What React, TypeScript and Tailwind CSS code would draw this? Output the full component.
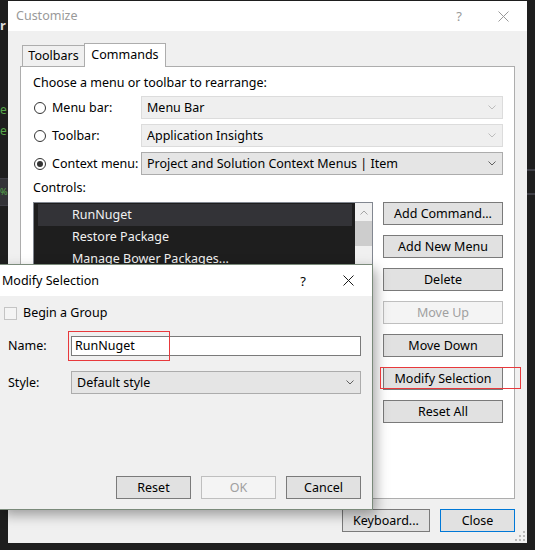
import React from "react";

function Chevron({ color = "#5f5f5f", up = false }: { color?: string; up?: boolean }) {
  return (
    <svg width="8" height="5" viewBox="0 0 8 5" className="block">
      <polyline
        points={up ? "0.5,4.5 4,1 7.5,4.5" : "0.5,0.5 4,4 7.5,0.5"}
        fill="none"
        stroke={color}
        strokeWidth="1"
      />
    </svg>
  );
}

function CloseX({ color }: { color: string }) {
  return (
    <svg width="11" height="11" viewBox="0 0 11 11" className="block">
      <path d="M0.5 0.5 L10.5 10.5 M10.5 0.5 L0.5 10.5" stroke={color} strokeWidth="1" fill="none" />
    </svg>
  );
}

function Btn({ label, kind = "normal", w }: { label: string; kind?: "normal" | "disabled" | "primary"; w: string }) {
  const base = "h-[23px] flex items-center justify-center border shrink-0 ";
  const cls =
    kind === "disabled"
      ? "border-[#bfbfbf] bg-[#f4f4f4] text-[#a0a0a0]"
      : kind === "primary"
      ? "border-[#0078d7] bg-[#e1e1e1] text-black"
      : "border-[#7a7a7a] bg-[#e1e1e1] text-black";
  return <div className={base + cls + " " + w}>{label}</div>;
}

function Radio({ checked }: { checked?: boolean }) {
  return (
    <div className="ml-[1px] w-[12px] h-[12px] rounded-full border border-[#333333] bg-white flex items-center justify-center shrink-0">
      {checked ? <div className="w-[6px] h-[6px] rounded-full bg-[#333333]" /> : null}
    </div>
  );
}

function Combo({ text, enabled, w }: { text: string; enabled?: boolean; w: string }) {
  return (
    <div
      className={
        "h-[23px] border flex items-center pl-[5px] pr-[6px] " +
        w +
        (enabled ? " border-[#acacac] bg-[#e5e5e5]" : " border-[#dcdcdc] bg-[#efefef]")
      }
    >
      <span className="flex-1 truncate">{text}</span>
      <Chevron color={enabled ? "#606060" : "#bcbcbc"} />
    </div>
  );
}

export default function App() {
  const sideButtons: { label: string; kind?: "normal" | "disabled" }[] = [
    { label: "Add Command..." },
    { label: "Add New Menu" },
    { label: "Delete" },
    { label: "Move Up", kind: "disabled" },
    { label: "Move Down" },
    { label: "Modify Selection" },
    { label: "Reset All" },
  ];

  return (
    <div className="relative w-[535px] h-[550px] overflow-hidden bg-[#1e1e1e] font-['Noto_Sans','Segoe_UI',sans-serif] text-[12.5px] leading-[16px] text-black">
      {/* background editor fragments */}
      <div className="absolute left-0 top-[17px] text-[13px] leading-[16px] font-bold text-[#dcdcdc]">r</div>
      <div className="absolute left-0 top-[102px] text-[12px] leading-[16px] text-[#57a64a]">e</div>
      <div className="absolute left-0 top-[123px] text-[12px] leading-[16px] text-[#57a64a]">e</div>
      <div className="absolute left-0 top-[178px] w-[10px] h-[28px] bg-[#333337] border-y border-[#3f3f46]" />
      <div className="absolute left-0 top-[185px] text-[9px] leading-[14px] text-[#57a64a]">%</div>
      <div className="absolute left-[527px] top-[169px] w-[8px] h-[2px] bg-[#3f3f46]" />
      <div className="absolute left-[527px] top-[193px] w-[8px] h-[2px] bg-[#3f3f46]" />

      {/* Customize window */}
      <div className="absolute left-[8px] top-[1px] w-[519px] h-[542px] bg-[#f0f0f0] flex flex-col">
        <div className="h-[30px] bg-white flex items-center shrink-0">
          <span className="pl-[8px] text-[#999999]">Customize</span>
          <span className="ml-auto text-[13px] text-[#999999]">?</span>
          <span className="ml-[36px] mr-[18px]">
            <CloseX color="#999999" />
          </span>
        </div>

        <div className="pl-[12px] pt-[12px] flex flex-col">
          {/* tabs */}
          <div className="relative z-10 flex items-end h-[23px] pl-[2px]">
            <div className="w-[63px] h-[21px] border border-b-0 border-[#adadad] bg-[#f0f0f0] flex items-center justify-center">
              Toolbars
            </div>
            <div className="w-[82px] h-[24px] -ml-px -mb-px border border-b-0 border-[#adadad] bg-white flex items-center justify-center pb-[2px]">
              Commands
            </div>
          </div>

          {/* panel */}
          <div className="w-[495px] h-[433px] border border-[#adadad] bg-white pl-[12px] pr-[11px] flex flex-col">
            <div className="mt-[8px] h-[16px]">Choose a menu or toolbar to rearrange:</div>

            <div className="mt-[5px] flex flex-col gap-[5px]">
              <div className="flex items-center h-[23px]">
                <div className="w-[108px] flex items-center gap-[6px]">
                  <Radio />
                  <span>Menu bar:</span>
                </div>
                <Combo text="Menu Bar" w="w-[362px]" />
              </div>
              <div className="flex items-center h-[23px]">
                <div className="w-[108px] flex items-center gap-[6px]">
                  <Radio />
                  <span>Toolbar:</span>
                </div>
                <Combo text="Application Insights" w="w-[362px]" />
              </div>
              <div className="flex items-center h-[23px]">
                <div className="w-[108px] flex items-center gap-[6px]">
                  <Radio checked />
                  <span className="whitespace-nowrap">Context menu:</span>
                </div>
                <Combo text="Project and Solution Context Menus | Item" enabled w="w-[362px]" />
              </div>
            </div>

            <div className="mt-[5px] h-[16px]">Controls:</div>

            <div className="mt-[6px] flex">
              <div className="w-[340px] h-[290px] border border-[#828790] flex">
                <div className="flex-1 bg-[#1e1e1e] pt-px pl-[4px] pr-[3px] text-[#f1f1f1]">
                  <div className="h-[22px] bg-[#333337] flex items-center pl-[34px]">RunNuget</div>
                  <div className="h-[22px] flex items-center pl-[34px]">Restore Package</div>
                  <div className="h-[22px] flex items-center pl-[34px]">Manage Bower Packages...</div>
                </div>
                <div className="w-[17px] bg-[#f0f0f0] flex flex-col">
                  <div className="h-[18px] flex items-center justify-center">
                    <Chevron up color="#a6a6a6" />
                  </div>
                  <div className="h-[25px] bg-[#cdcdcd]" />
                </div>
              </div>

              <div className="ml-[10px] w-[120px] flex flex-col gap-[10px]">
                {sideButtons.map((b) => (
                  <Btn key={b.label} label={b.label} kind={b.kind} w="w-[120px]" />
                ))}
              </div>
            </div>
          </div>

          {/* bottom buttons */}
          <div className="mt-[10px] flex justify-end gap-[10px] pr-[12px]">
            <Btn label="Keyboard..." w="w-[88px]" />
            <Btn label="Close" kind="primary" w="w-[75px]" />
          </div>
        </div>

        {/* resize grip */}
        <svg width="11" height="11" viewBox="0 0 11 11" className="absolute right-[2px] bottom-[2px]">
          <g fill="#b9b9b9">
            <rect x="9" y="1" width="2" height="2" />
            <rect x="9" y="5" width="2" height="2" />
            <rect x="5" y="5" width="2" height="2" />
            <rect x="9" y="9" width="2" height="2" />
            <rect x="5" y="9" width="2" height="2" />
            <rect x="1" y="9" width="2" height="2" />
          </g>
        </svg>
      </div>

      {/* Modify Selection dialog */}
      <div className="absolute left-0 top-[264px] w-[373px] h-[246px] border border-l-0 border-[#7a8a7a] bg-[#f0f0f0] flex flex-col shadow-[3px_5px_12px_rgba(0,0,0,0.35)]">
        <div className="h-[31px] bg-white flex items-center shrink-0">
          <span className="pl-[2px]">Modify Selection</span>
          <span className="ml-auto text-[13px]">?</span>
          <span className="ml-[37px] mr-[18px]">
            <CloseX color="#1a1a1a" />
          </span>
        </div>

        <div className="flex-1 flex flex-col pl-[4px] pr-[11px] pb-[10px]">
          <div className="mt-[10px] h-[14px] flex items-center gap-[6px]">
            <div className="w-[13px] h-[13px] border border-[#c4c4c4] bg-[#f4f4f4]" />
            <span>Begin a Group</span>
          </div>

          <div className="mt-[16px] flex items-center h-[20px] pl-[4px]">
            <span className="w-[63px]">Name:</span>
            <div className="w-[290px] h-[20px] border border-[#7a7a7a] bg-white flex items-center pl-[3px]">RunNuget</div>
          </div>

          <div className="mt-[15px] flex items-center h-[23px] pl-[4px]">
            <span className="w-[63px]">Style:</span>
            <Combo text="Default style" enabled w="w-[290px]" />
          </div>

          <div className="mt-auto flex justify-end gap-[10px]">
            <Btn label="Reset" w="w-[75px]" />
            <Btn label="OK" kind="disabled" w="w-[75px]" />
            <Btn label="Cancel" w="w-[75px]" />
          </div>
        </div>
      </div>

      {/* red annotation boxes */}
      <div className="absolute left-[68px] top-[331px] w-[102px] h-[30px] border border-[#e8393c]" />
      <div className="absolute left-[380px] top-[367px] w-[141px] h-[22px] border border-[#e8393c]" />
    </div>
  );
}
